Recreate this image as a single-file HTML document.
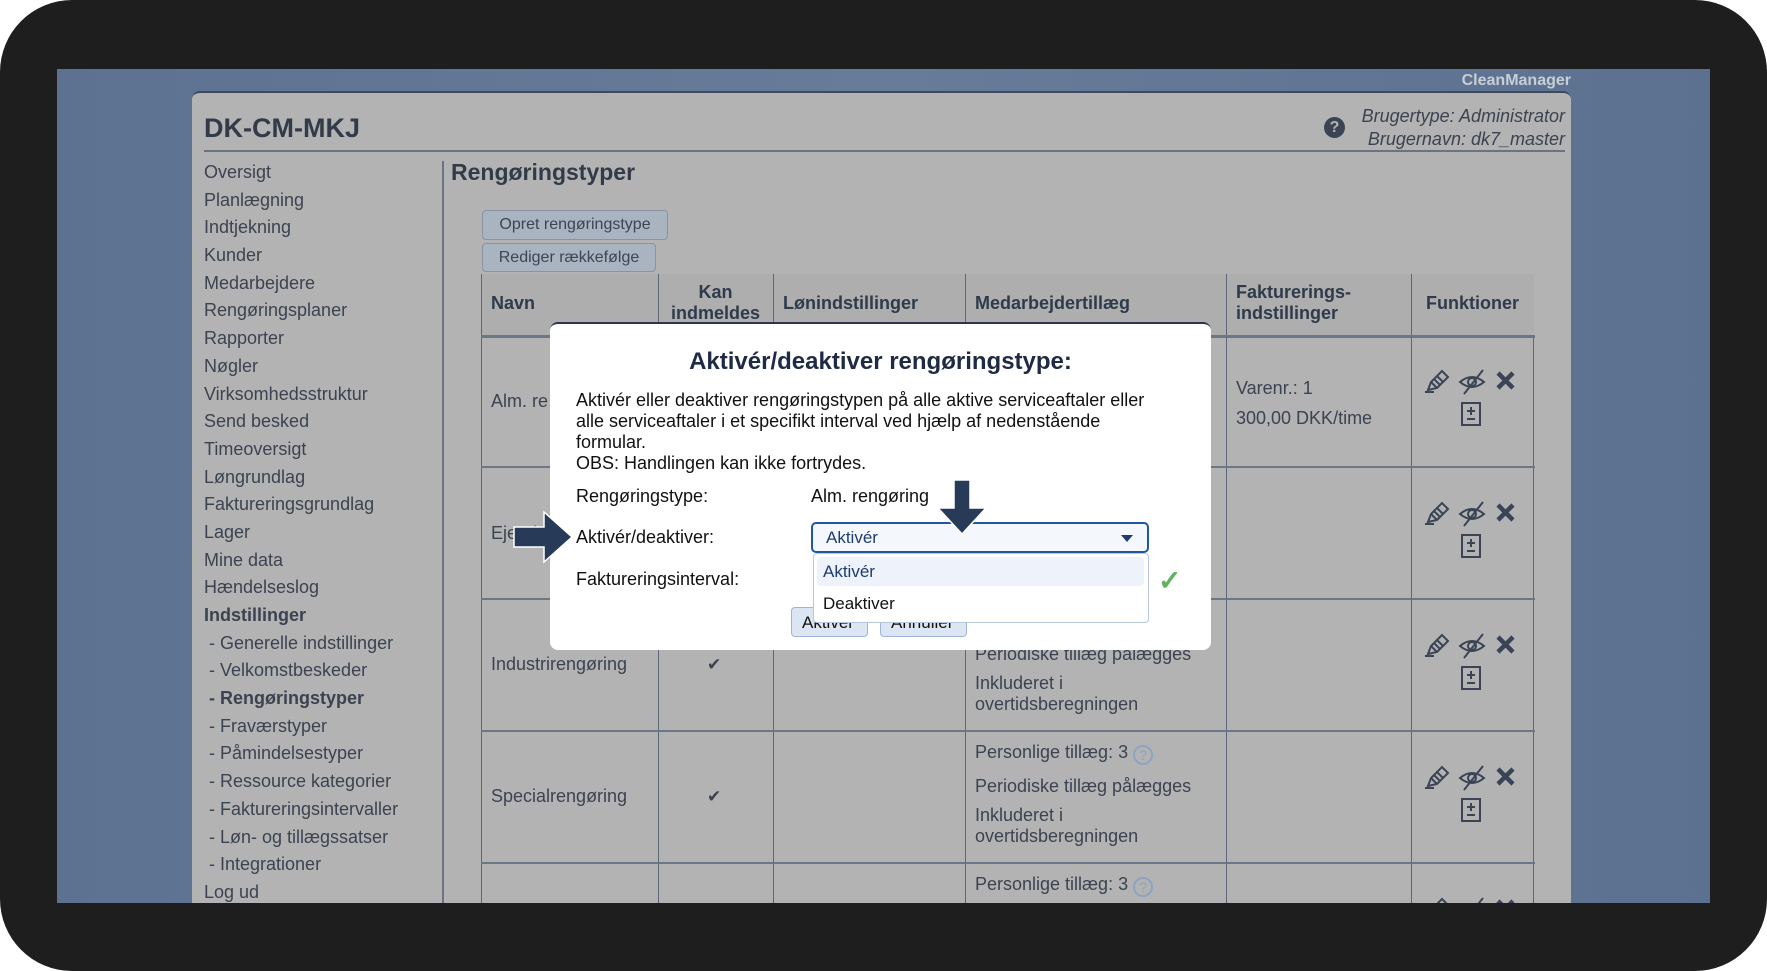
<!DOCTYPE html>
<html><head><meta charset="utf-8"><style>
*{margin:0;padding:0;box-sizing:border-box}
body{width:1767px;height:971px;overflow:hidden;background:#fff;font-family:"Liberation Sans",Arial,sans-serif;position:relative}
.frame{position:absolute;left:0;top:0;width:1767px;height:971px;background:#1f1e1f;border-radius:72px}
.screen{position:absolute;left:57px;top:69px;width:1653px;height:834px;background:linear-gradient(90deg,#5d7291 0%,#667c99 50%,#5c7190 100%);overflow:hidden}
.abs{position:absolute}
.panel{position:absolute;left:135px;top:22px;width:1379px;height:830px;background:#b3b3b3;border-radius:8px 8px 0 0;border-top:2px solid #3e4a5c}
.t{color:#3b4351;font-size:18px;white-space:nowrap}
.side div{height:27.7px;line-height:27.7px}
.btn{position:absolute;background:#aab3c0;border:1px solid #8794a6;border-radius:4px;color:#3b4555;font-size:16px;text-align:center}
.th{position:absolute;font-weight:bold;color:#2f3a4b;font-size:18px}
.vl{position:absolute;width:1px;background:#5c6676}
.hl{position:absolute;height:2px;background:#6d7684}
.ic{position:absolute}
</style></head><body>
<div class="frame"></div>
<div class="screen">
  <div class="abs" style="right:139px;top:3px;color:#c9ced6;font-weight:bold;font-size:16px">CleanManager</div>
  <div class="panel">
    <div class="abs" style="left:12px;top:20px;font-size:27px;font-weight:bold;color:#323b49">DK-CM-MKJ</div>
    <div class="abs" style="left:12px;top:57px;width:1361px;height:2px;background:#6a7382"></div>
    <div class="abs t" style="right:6px;top:12px;font-style:italic;text-align:right;line-height:23px">Brugertype: Administrator<br>Brugernavn: dk7_master</div>
    <div class="abs" style="left:1132px;top:24px;width:21px;height:21px;border-radius:50%;background:#3a4455;color:#b3b3b3;font-weight:bold;font-size:16px;text-align:center;line-height:21px">?</div>
    <div class="abs t side" style="left:12px;top:66px">
      <div>Oversigt</div><div>Planlægning</div><div>Indtjekning</div><div>Kunder</div><div>Medarbejdere</div><div>Rengøringsplaner</div><div>Rapporter</div><div>Nøgler</div><div>Virksomhedsstruktur</div><div>Send besked</div><div>Timeoversigt</div><div>Løngrundlag</div><div>Faktureringsgrundlag</div><div>Lager</div><div>Mine data</div><div>Hændelseslog</div><div style="font-weight:bold">Indstillinger</div>
      <div>&nbsp;- Generelle indstillinger</div><div>&nbsp;- Velkomstbeskeder</div><div style="font-weight:bold">&nbsp;- Rengøringstyper</div><div>&nbsp;- Fraværstyper</div><div>&nbsp;- Påmindelsestyper</div><div>&nbsp;- Ressource kategorier</div><div>&nbsp;- Faktureringsintervaller</div><div>&nbsp;- Løn- og tillægssatser</div><div>&nbsp;- Integrationer</div><div>Log ud</div>
    </div>
    <div class="abs" style="left:250px;top:68px;width:2px;height:770px;background:#6a7382"></div>
    <div class="abs" style="left:259px;top:66px;font-size:23px;font-weight:bold;color:#323b49">Rengøringstyper</div>
    <div class="btn" style="left:290px;top:117px;width:186px;height:30px;line-height:28px">Opret rengøringstype</div>
    <div class="btn" style="left:290px;top:150px;width:174px;height:29px;line-height:27px">Rediger rækkefølge</div>
    <div class="abs" style="left:289px;top:181px;width:1053px;height:680px;border:1px solid #5c6676;border-bottom:none"></div>
    <div class="abs" style="left:290px;top:181px;width:1052px;height:62px;background:#aeaeae"></div>
    <div class="vl" style="left:466px;top:181px;height:680px"></div>
    <div class="vl" style="left:581px;top:181px;height:680px"></div>
    <div class="vl" style="left:773px;top:181px;height:680px"></div>
    <div class="vl" style="left:1034px;top:181px;height:680px"></div>
    <div class="vl" style="left:1219px;top:181px;height:680px"></div>
    <div class="hl" style="left:289px;top:242px;width:1054px;height:3px"></div>
    <div class="hl" style="left:289px;top:373px;width:1054px"></div>
    <div class="hl" style="left:289px;top:505px;width:1054px"></div>
    <div class="hl" style="left:289px;top:637px;width:1054px"></div>
    <div class="hl" style="left:289px;top:769px;width:1054px"></div>
    <div class="th" style="left:299px;top:200px">Navn</div>
    <div class="th" style="left:466px;top:189px;width:115px;text-align:center;line-height:21px">Kan<br>indmeldes</div>
    <div class="th" style="left:591px;top:200px">Lønindstillinger</div>
    <div class="th" style="left:783px;top:200px">Medarbejdertillæg</div>
    <div class="th" style="left:1044px;top:189px;line-height:21px">Fakturerings-<br>indstillinger</div>
    <div class="th" style="left:1219px;top:200px;width:123px;text-align:center">Funktioner</div>
    <div class="abs t" style="left:299px;top:298px">Alm. re</div>
    <div class="abs t" style="left:1044px;top:280px;line-height:30px">Varenr.: 1<br>300,00 DKK/time</div>
    <div class="abs t" style="left:299px;top:430px">Ejendom</div>
    <div class="abs t" style="left:299px;top:561px">Industrirengøring</div>
    <div class="abs t" style="left:515px;top:562px;font-size:17px">✔</div>
    <div class="abs t" style="left:783px;top:551px;line-height:21px">Periodiske tillæg pålægges</div>
    <div class="abs t" style="left:783px;top:580px;line-height:21px">Inkluderet i<br>overtidsberegningen</div>
    <div class="abs t" style="left:299px;top:693px">Specialrengøring</div>
    <div class="abs t" style="left:515px;top:694px;font-size:17px">✔</div>
    <div class="abs t" style="left:783px;top:649px">Personlige tillæg: 3 <span style="display:inline-block;width:20px;height:20px;border:2px solid #8ea3c2;border-radius:50%;color:#8ea3c2;font-size:14px;text-align:center;line-height:16px;vertical-align:-2px">?</span></div>
    <div class="abs t" style="left:783px;top:683px">Periodiske tillæg pålægges</div>
    <div class="abs t" style="left:783px;top:712px;line-height:21px">Inkluderet i<br>overtidsberegningen</div>
    <div class="abs t" style="left:783px;top:781px">Personlige tillæg: 3 <span style="display:inline-block;width:20px;height:20px;border:2px solid #8ea3c2;border-radius:50%;color:#8ea3c2;font-size:14px;text-align:center;line-height:16px;vertical-align:-2px">?</span></div>
  </div>
  <svg class="ic" style="left:0;top:0" width="1653" height="834">
    <g id="icons" fill="none" stroke="#3a4455" stroke-width="2">
      <g transform="translate(1368,301)">
        <path d="M3 20 L6 12 L17 1 L23 7 L12 18 Z M6 12 L12 18 M9 9 L15 15 M12 6 L18 12 M0 22 L9 22"/>
        <g transform="translate(34,-1)"><path d="M1 13 Q13 3 25 13 Q13 23 1 13 Z"/><circle cx="13" cy="13" r="4"/><path d="M5 25 L24 1"/></g>
        <path d="M73 3 L88 18 M88 3 L73 18" stroke-width="4.5"/>
        <g transform="translate(37,33)"><rect x="0" y="0" width="18" height="22"/><path d="M9 4 V12 M5 8 H13 M5 16 H13"/></g>
      </g>
    </g>
    <use href="#icons" x="0" y="132"/>
    <use href="#icons" x="0" y="264"/>
    <use href="#icons" x="0" y="396"/>
    <use href="#icons" x="0" y="528"/>
  </svg>
</div>
<div class="abs" style="left:550px;top:322px;width:661px;height:328px;background:#fff;border-radius:8px;border-top:2px solid #2a3550">
  <div class="abs" style="left:0;top:24px;width:661px;text-align:center;font-size:24px;font-weight:bold;color:#1f2a44">Aktivér/deaktiver rengøringstype:</div>
  <div class="abs" style="left:26px;top:66px;font-size:18px;line-height:21px;color:#111">Aktivér eller deaktiver rengøringstypen på alle aktive serviceaftaler eller<br>alle serviceaftaler i et specifikt interval ved hjælp af nedenstående<br>formular.<br>OBS: Handlingen kan ikke fortrydes.</div>
  <div class="abs" style="left:26px;top:162px;font-size:18px;color:#111">Rengøringstype:</div>
  <div class="abs" style="left:261px;top:162px;font-size:18px;color:#111">Alm. rengøring</div>
  <div class="abs" style="left:26px;top:203px;font-size:18px;color:#111">Aktivér/deaktiver:</div>
  <div class="abs" style="left:26px;top:245px;font-size:18px;color:#111">Faktureringsinterval:</div>
  <div class="abs" style="left:241px;top:283px;width:77px;height:30px;border:1px solid #9fb4d6;border-radius:4px;background:#dbe5f3;font-size:17px;padding:5px 10px;overflow:hidden;color:#111">Aktivér</div>
  <div class="abs" style="left:330px;top:283px;width:87px;height:30px;border:1px solid #9fb4d6;border-radius:4px;background:#dbe5f3;font-size:17px;padding:5px 10px;overflow:hidden;color:#111">Annullér</div>
  <div class="abs" style="left:261px;top:198px;width:338px;height:31px;border:2.5px solid #1f57a6;border-radius:5px;background:#f4f7fc;font-size:17px;color:#1f3c70;padding:4px 13px">Aktivér<span style="position:absolute;right:14px;top:11px;border-left:6px solid transparent;border-right:6px solid transparent;border-top:7px solid #1f3c70"></span></div>
  <div class="abs" style="left:263px;top:229px;width:336px;height:70px;border:1px solid #b9c7dd;border-radius:4px;background:#fff">
    <div class="abs" style="left:3px;top:3px;width:327px;height:29px;background:#eef2fa;border-radius:4px;font-size:17px;color:#1f3c70;padding:5px 6px">Aktivér</div>
    <div class="abs" style="left:9px;top:40px;font-size:17px;color:#111">Deaktiver</div>
  </div>
  <div class="abs" style="left:608px;top:240px;color:#5fb35a;font-size:28px;font-weight:bold">✓</div>
</div>
<svg class="abs" style="left:512px;top:510px" width="62" height="54"><path d="M2 17 H32 V2 L60 27 L32 52 V37 H2 Z" fill="#273b58" stroke="#fff" stroke-width="1.5"/></svg>
<svg class="abs" style="left:936px;top:478px" width="54" height="60"><path d="M18 2 H34 V30 H50 L26 56 L2 30 H18 Z" fill="#273b58" stroke="#fff" stroke-width="1.5"/></svg>
</body></html>
